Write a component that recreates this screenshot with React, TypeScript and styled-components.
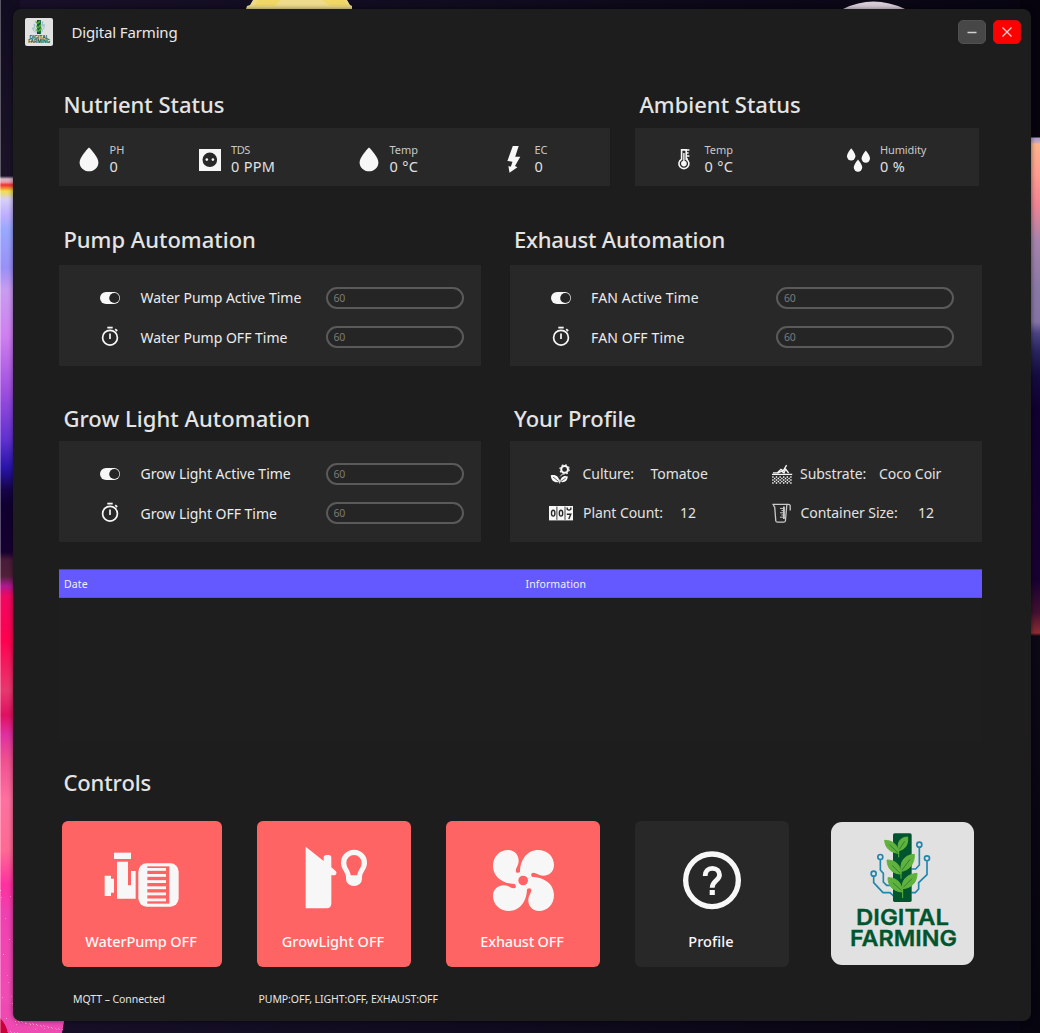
import React from "react";
import styled, { createGlobalStyle } from "styled-components";

const font = `"Noto Sans", "Open Sans", sans-serif`;
const white = "#f7f7f7";
const salmon = "#ff6464";

const GlobalStyle = createGlobalStyle`
  * { box-sizing: border-box; }
  body { margin: 0; overflow: hidden; background: #0a0716; font-family: ${font}; }
`;

const Desktop = styled.div`
  position: relative;
  width: 1040px;
  height: 1033px;
  padding: 9px 9px 12px 13px;
  overflow: hidden;
`;

const Wallpaper = styled.svg`
  position: absolute;
  inset: 0;
  z-index: -1;
`;

const AppWindow = styled.div`
  width: 1018px;
  height: 1012px;
  border-radius: 8px;
  background: #1d1d1d;
  box-shadow: 0 0 5px rgba(0, 0, 0, 0.55);
  display: flex;
  flex-direction: column;
`;

const TitleBar = styled.header`
  display: flex;
  align-items: center;
  height: 45px;
  padding: 0 10.5px 0 11.5px;
  border-radius: 8px 8px 0 0;
`;

const Title = styled.div`
  flex: 1;
  margin: 1px 0 0 19px;
  font-size: 15px;
  line-height: 20px;
  letter-spacing: -0.15px;
  color: #e8e8e8;
`;

const WindowButton = styled.button<{ $bg: string; $border: string }>`
  width: 28px;
  height: 24px;
  margin: 0 0 0 7px;
  padding: 0;
  border: 1px solid ${(p) => p.$border};
  border-radius: 5px;
  background: ${(p) => p.$bg};
  display: grid;
  place-items: center;
`;

const Content = styled.main`
  padding: 35px 0 0 46px;
`;

const SectionRow = styled.div<{ $columns: string; $gap: number; $after: number }>`
  display: grid;
  grid-template-columns: ${(p) => p.$columns};
  column-gap: ${(p) => p.$gap}px;
  margin-bottom: ${(p) => p.$after}px;
`;

const Heading = styled.h2<{ $gap: number; $track?: number }>`
  margin: 0 0 ${(p) => p.$gap}px 4.4px;
  font-size: 22px;
  font-weight: 500;
  line-height: 30px;
  letter-spacing: ${(p) => p.$track ?? 0}px;
  color: #e4e4e4;
  white-space: nowrap;
`;

const StatPanel = styled.div<{ $columns: string; $pad: number }>`
  display: grid;
  grid-template-columns: ${(p) => p.$columns};
  height: 58px;
  padding-left: ${(p) => p.$pad}px;
  background: #282828;
`;

const Stat = styled.div`
  display: flex;
  white-space: nowrap;
`;

const StatText = styled.div`
  padding-top: 13px;
`;

const StatLabel = styled.div<{ $track?: number }>`
  font-size: 11px;
  line-height: 17px;
  letter-spacing: ${(p) => p.$track ?? 0}px;
  color: #c9c9c9;
`;

const StatValue = styled.div`
  font-size: 14.5px;
  line-height: 16px;
  letter-spacing: 0.3px;
  color: #e0e0e0;
`;

const Panel = styled.div`
  height: 101px;
  padding-top: 13px;
  background: #282828;
`;

const SettingRow = styled.label`
  display: flex;
  align-items: center;
  height: 39.4px;
  padding-left: 36px;
`;

const SettingName = styled.span<{ $track?: number }>`
  width: 185px;
  margin: 1px 0 0 15.5px;
  font-size: 14px;
  line-height: 20px;
  letter-spacing: ${(p) => p.$track ?? 0}px;
  color: #ececec;
  white-space: nowrap;
`;

const TimeInput = styled.input<{ $width: number }>`
  width: ${(p) => p.$width}px;
  height: 22px;
  padding: 0 0 0 6px;
  border: 2px solid #5a5a5a;
  border-radius: 11px;
  background: #252525;
  font-family: ${font};
  font-size: 10.5px;
  letter-spacing: -0.2px;
  outline: none;
  &::placeholder { color: #7b7b7b; opacity: 1; }
`;

const ProfileRow = styled.div`
  display: grid;
  grid-template-columns: 221px 1fr;
  height: 39px;
  padding-left: 39.5px;
`;

const ProfileItem = styled.div`
  display: flex;
  align-items: center;
  font-size: 14px;
  line-height: 20px;
  color: #e2e2e2;
  white-space: nowrap;
`;

const ProfileKey = styled.span<{ $gap: number; $width: number }>`
  margin-left: ${(p) => p.$gap}px;
  width: ${(p) => p.$width}px;
  letter-spacing: -0.06px;
`;

const ProfileValue = styled.span`
  letter-spacing: -0.06px;
`;

const LogTable = styled.div`
  width: 923px;
  height: 173px;
  margin-bottom: 25px;
  background: #1e1e1e;
`;

const LogHead = styled.div`
  display: grid;
  grid-template-columns: 1fr 1fr;
  align-items: center;
  height: 29px;
  border-top: 1px solid #4a44a8;
  border-bottom: 1px solid #5a50e0;
  background: #6459ff;
`;

const LogCell = styled.div`
  padding: 1px 0 0 5px;
  font-size: 10.5px;
  line-height: 16px;
  letter-spacing: 0.1px;
  color: #f0f0ff;
`;

const ControlRow = styled.div`
  display: flex;
  align-items: flex-start;
  gap: 35px;
  margin-left: 3px;
`;

const ControlButton = styled.button<{ $width: number; $bg: string }>`
  width: ${(p) => p.$width}px;
  height: 146px;
  padding: 0;
  border: 0;
  border-radius: 6px;
  background: ${(p) => p.$bg};
  display: flex;
  flex-direction: column;
  align-items: center;
`;

const ControlLabel = styled.span<{ $track?: number }>`
  padding-right: 2px;
  font-family: ${font};
  font-size: 14.5px;
  font-weight: 500;
  line-height: 20px;
  letter-spacing: ${(p) => p.$track ?? 0}px;
  color: #fff6f6;
`;

const LogoCard = styled.div<{ $size: number; $radius: number }>`
  width: ${(p) => p.$size}px;
  height: ${(p) => p.$size}px;
  border-radius: ${(p) => p.$radius}px;
  background: #e1e1e1;
  overflow: hidden;
  flex: none;
  svg { display: block; }
`;

const LogoSlot = styled.div`
  margin: 1px 0 0 7px;
`;

const StatusBar = styled.footer`
  display: grid;
  grid-template-columns: 185.5px 1fr;
  margin: 24px 0 0 14px;
  font-size: 10.5px;
  line-height: 16px;
  letter-spacing: -0.07px;
  color: #e6e6e6;
`;

const StatIcon = ({ children }: { children: React.ReactNode }) => (
  <svg width="42" height="58" viewBox="0 0 42 58" fill={white}>{children}</svg>
);

const DropIcon = () => (
  <StatIcon>
    <path d="M21 19.5C23.4 21.8 30.4 29.5 30.4 34.4C30.4 39.4 26.2 43.2 21 43.2C15.8 43.2 11.6 39.4 11.6 34.4C11.6 29.5 18.6 21.8 21 19.5Z" />
  </StatIcon>
);

const SocketIcon = () => (
  <StatIcon>
    <rect x="10" y="21" width="22" height="22" />
    <circle cx="20.8" cy="31.8" r="7.3" fill="#282828" />
    <circle cx="17.8" cy="31.6" r="1.3" />
    <circle cx="23.9" cy="31.6" r="1.3" />
  </StatIcon>
);

const BoltIcon = () => (
  <StatIcon>
    <path d="M19.8 18H25.7L22.2 28.7H27.3L22 38L24.4 39.3L16.5 44.8L15.4 38L17.8 38.7L19.5 33.7L14.4 33Z" />
  </StatIcon>
);

const ThermometerIcon = () => (
  <StatIcon>
    <path d="M18.6 31.2V21.9H23.2V31.2A5 5 0 1 1 18.6 31.2Z" fill="none" stroke={white} strokeWidth="1.6" />
    <circle cx="20.9" cy="35.6" r="2.8" />
    <path d="M20.9 25V35M23 22H26.4M23 25H25.6M23 28H26.4M23 31H25" stroke={white} strokeWidth="1.4" />
  </StatIcon>
);

const smallDrop = "M0 0C1.2 1.4 4.2 5.4 4.2 8A4.2 4.2 0 0 1 -4.2 8C-4.2 5.4 -1.2 1.4 0 0Z";
const HumidityIcon = () => (
  <StatIcon>
    <path transform="translate(13.2 20.2)" d={smallDrop} />
    <path transform="translate(27.8 22.6)" d={smallDrop} />
    <path transform="translate(20 31.6)" d={smallDrop} />
  </StatIcon>
);

const ToggleIcon = () => (
  <svg width="30" height="24" viewBox="0 0 30 24">
    <rect x="5" y="6" width="20" height="12" rx="6" fill={white} />
    <circle cx="19.3" cy="12" r="5.1" fill="#252525" />
  </svg>
);

const TimerIcon = () => (
  <svg width="30" height="24" viewBox="0 0 30 24" fill="none" stroke={white}>
    <circle cx="15" cy="12.7" r="7.4" strokeWidth="1.7" />
    <path d="M12.3 2.6H17.7" strokeWidth="1.8" />
    <path d="M15 8.600V14" strokeWidth="1.7" />
    <path d="M20.2 4.2L22.2 6" strokeWidth="1.7" />
  </svg>
);

const ProfileSvg = ({ children }: { children: React.ReactNode }) => (
  <svg width="24" height="24" viewBox="0 0 24 24" fill={white}>{children}</svg>
);

const FlowerIcon = () => (
  <ProfileSvg>
    <circle cx="15.6" cy="7.4" r="3.4" fill="none" stroke={white} strokeWidth="2" />
    <circle cx="15.6" cy="7.4" r="4.7" fill="none" stroke={white} strokeWidth="1.1" strokeDasharray="1.8 1.89" />
    <path d="M14 11.5C13 12.6 12 13.5 11.2 14.4M10.7 17.5V21.5" stroke={white} strokeWidth="1" fill="none" />
    <path d="M1.8 13.2C7 12.3 10.4 14.4 10.2 20C5.4 21.2 2 18.6 1.8 13.2Z" />
    <path d="M18.8 14.5C15 12.8 11.4 15 11.2 19.8C15.6 21 18.6 18.8 18.8 14.5Z" />
    <path d="M4 15L9.6 19.4M16.8 16L12 19.4" stroke="#282828" strokeWidth="0.7" />
  </ProfileSvg>
);

const CounterIcon = () => (
  <ProfileSvg>
    <rect x="0" y="5" width="24" height="14.4" />
    <path d="M7.9 5.6V18.8M16 5.6V18.8" stroke="#282828" strokeWidth="0.9" />
    <g fill="none" stroke="#282828" strokeWidth="1.4">
      <ellipse cx="4.2" cy="12.2" rx="1.7" ry="2.9" />
      <ellipse cx="12" cy="12.2" rx="1.7" ry="2.9" />
      <path d="M18.2 6.4V8.2Q20 10 21.8 8.2V6.4" />
      <path d="M17.8 13.2H21.8L19.8 18" />
    </g>
  </ProfileSvg>
);

const SoilIcon = () => (
  <ProfileSvg>
    <g stroke={white} fill="none">
      <path d="M2 12.4H22.2" strokeWidth="1.3" />
      <path d="M3 10.8H7.5L11 7.4L13.2 8.8L16.6 3.2M8 11L11.6 9.2L14 11L15.6 7L18.6 11" strokeWidth="1.3" />
      <path d="M2.2 15H22M2.2 18H22M2.2 21H22" strokeWidth="1.4" strokeDasharray="1.4 2.2" />
      <path d="M4 16.500H21M4 19.500H21" strokeWidth="1.4" strokeDasharray="1.4 2.2" />
    </g>
  </ProfileSvg>
);

const BeakerIcon = () => (
  <ProfileSvg>
    <g stroke="#c9c9c9" fill="none">
      <path d="M2.4 3.3H18.2Q20.4 3.3 20.2 6V9.4M3.2 4.2L4.7 6L5.800 20Q6 21.2 7.4 21.2H13.6Q15.2 21.2 15.4 20L16.8 4" strokeWidth="1.3" />
      <path d="M13.900 5.500V18" strokeWidth="1.800" />
      <path d="M10 7.4H15M11.4 9.6H15M10 11.8H15M11.4 14H15M10 16.2H15" strokeWidth="1" />
    </g>
  </ProfileSvg>
);

const PumpIcon = () => (
  <svg width="160" height="110" viewBox="186 183 480 330" fill={white}>
    <rect x="342" y="278" width="51" height="19" />
    <path d="M351 305H384V376H393V333H407V416H351Z" />
    <path d="M314 347H333V356H342V398H333V408H314Z" />
    <rect x="415" y="310" width="121" height="130" rx="25" />
    <rect x="442" y="319" width="66" height="112" fill={salmon} />
    {[324, 342, 360.5, 379, 397.5, 415.5].map((y) => (
      <rect key={y} x="441" y={y} width="57" height="8.5" />
    ))}
  </svg>
);

const HouseLightIcon = () => (
  <svg width="154" height="110" viewBox="771 183 462 330" fill={white}>
    <path d="M917 260L971 303V293Q971 285 979 285H986Q994 285 994 293V322L1007 333Q1013 340 1005 346H994V430Q994 445 980 445H917Z" />
    <path
      fillRule="evenodd"
      d="M1062 269A39 39 0 0 1 1101 308C1101 328 1086 336 1086 352V357A24 21 0 0 1 1038 357V352C1038 336 1023 328 1023 308A39 39 0 0 1 1062 269ZM1062 285A23 23 0 0 0 1039 308C1039 324 1051 330 1052 346H1072C1073 330 1085 324 1085 308A23 23 0 0 0 1062 285Z"
    />
  </svg>
);

const FanIcon = () => (
  <svg width="154" height="110" viewBox="48 63 462 330" fill={white}>
    {[0, 90, 180, 270].map((a) => (
      <path
        key={a}
        transform={`rotate(${a} 280.5 241.5)`}
        d="M270 218C270 178 292 150 324 150C352 150 372 170 372 195C372 216 356 227 340 227C326 227 320 219 311 219L306 231L280.5 241.5Z"
      />
    ))}
    {[0, 90, 180, 270].map((a) => (
      <circle key={a} transform={`rotate(${a} 280.5 241.5)`} cx="310" cy="224.5" r="6.5" fill={salmon} />
    ))}
    <circle cx="279.5" cy="241.5" r="14.5" fill={salmon} />
  </svg>
);

const HelpIcon = () => (
  <svg width="154" height="110" viewBox="615 63 462 330" fill="none" stroke={white} strokeWidth="16">
    <circle cx="846" cy="241" r="79" />
    <path d="M825.500 228C825.500 214 834 205 847 205C860 205 868.500 214 868.500 225C868.500 241 846.500 243 846.500 263" strokeWidth="14.500" />
    <rect x="839" y="270" width="15.500" height="15" fill={white} stroke="none" />
  </svg>
);

const sprigs = [
  "M266 172V150M266 160C243 158 226 146 224 121C246 121 264 133 266 160ZM266 152C260 128 270 112 293 111C295 134 286 148 266 152Z",
  "M273 236V214M273 222C250 222 232 208 231 180C254 180 272 192 273 222ZM274 214C268 184 286 164 313 163C314 190 300 210 274 214Z",
  "M278 294V262M277 276C252 274 234 260 234 233C258 233 276 246 277 276ZM278 266C272 242 292 222 321 220C321 246 306 264 278 266Z",
];

const Logo = ({ size, view }: { size: number; view: string }) => (
  <svg width={size} height={size} viewBox={view}>
    <g fill="none" stroke="#1f86ad" strokeWidth="5">
      <path d="M211 180V210L220 220V246L230 256H250M191 230V248L219 278H240L252 289M328 143V195L317 207H304M351 184V224L326 248V267L316 278H304" />
      <circle cx="211" cy="171" r="7.500" />
      <circle cx="191" cy="221" r="7.500" />
      <circle cx="328" cy="134" r="7.500" />
      <circle cx="351" cy="175" r="7.500" />
    </g>
    <rect x="249" y="100" width="56" height="206" rx="5" fill="#00552f" />
    {sprigs.map((d) => (
      <path key={d} d={d} fill="#60b23d" stroke="#60b23d" strokeWidth="3" />
    ))}
    <path
      d="M238 134L264 158M284 124L268 148M246 196L271 220M300 178L276 210M248 248L275 272M306 236L280 262"
      stroke="#1e7a35"
      strokeWidth="2.500"
    />
    <g fill="#00552f" stroke="#00552f" strokeWidth="1" fontFamily="Inter, sans-serif" fontWeight="600" fontSize="66">
      <text x="138" y="373.500" textLength="279" lengthAdjust="spacingAndGlyphs">DIGITAL</text>
      <text x="120" y="437" textLength="321" lengthAdjust="spacingAndGlyphs">FARMING</text>
    </g>
  </svg>
);

const leftStops: [number, string][] = [
  [0, "#120c20"], [176, "#1b1429"], [179, "#d8b8c8"], [182, "#e8a0b0"], [185, "#f03030"], [191, "#f0e040"],
  [199, "#d8d0f8"], [214, "#c0b0ff"], [230, "#98a8ff"], [268, "#9a90f8"], [290, "#c99cf0"], [335, "#cf80f0"],
  [390, "#a050e0"], [440, "#6030d0"], [468, "#2814a8"], [490, "#160448"], [505, "#100030"], [552, "#160030"],
  [560, "#481c38"], [576, "#502038"], [586, "#b01890"], [596, "#f00860"], [640, "#ff0050"], [690, "#e83870"],
  [715, "#e01060"], [735, "#e030a0"], [760, "#f05090"], [800, "#ff70a0"], [850, "#ff6a94"], [885, "#ff30a0"],
  [912, "#f040b0"], [1000, "#f04cb4"], [1033, "#e83cac"],
];
const rightStops: [number, string][] = [
  [0, "#06030f"], [137, "#06030f"], [138, "#a89ac8"], [142, "#c8a8c0"], [144, "#fcb48e"], [175, "#ff9c90"],
  [205, "#f08494"], [240, "#a884ac"], [290, "#8878a4"], [322, "#8474a4"], [333, "#4c4484"], [352, "#28245c"],
  [375, "#150c40"], [410, "#100030"], [580, "#180030"], [612, "#401030"], [633, "#8c2c34"], [636, "#0c0816"],
  [1033, "#06040e"],
];

const Stops = ({ list }: { list: [number, string][] }) => (
  <>{list.map(([y, c]) => <stop key={y} offset={y / 1033} stopColor={c} />)}</>
);

const specks = Array.from({ length: 90 }, (_, i) => ({
  x: (i * 37) % 63,
  y: i < 55 ? 890 + ((i * 53) % 143) : 1021 + ((i * 7) % 12),
  c: i % 3 ? "#ff9ad8" : "#ffe0b0",
}));

const Backdrop = () => (
  <Wallpaper width="1040" height="1033" viewBox="0 0 1040 1033">
    <defs>
      <linearGradient id="left" x1="0" y1="0" x2="0" y2="1033" gradientUnits="userSpaceOnUse"><Stops list={leftStops} /></linearGradient>
      <linearGradient id="right" x1="0" y1="0" x2="0" y2="1033" gradientUnits="userSpaceOnUse"><Stops list={rightStops} /></linearGradient>
      <linearGradient id="base" x1="0" x2="1"><stop offset="0" stopColor="#171028" /><stop offset="1" stopColor="#080512" /></linearGradient>
    </defs>
    <rect width="1040" height="1033" fill="url(#base)" />
    <rect width="20" height="1033" fill="url(#left)" />
    <path d="M0 1010H66L62 1033H0Z" fill="#ee4ab2" />
    {specks.map((s, i) => <rect key={i} x={s.x} y={s.y} width="1" height="1" fill={s.c} opacity="0.7" />)}
    <path d="M0 1018Q6 1024 8 1033H0Z" fill="#c8003c" />
    <rect x="1020" width="20" height="1033" fill="url(#right)" />
    <rect width="1" height="1033" fill="#fff" opacity="0.3" />
    <path d="M246 9L247 6L250 5L253 0H347L350 5L352 6V9Z" fill="#eedc8c" />
    <path d="M258 0H280L275 6H254ZM322 0H344L349 6H330Z" fill="#f3d44c" opacity="0.6" />
    <path d="M843 9Q873 -6 905 9Z" fill="#d8ccd8" />
  </Wallpaper>
);

const Metric = ({ icon, label, value, track }: { icon: React.ReactNode; label: string; value: string; track?: number }) => (
  <Stat>
    {icon}
    <StatText>
      <StatLabel $track={track}>{label}</StatLabel>
      <StatValue>{value}</StatValue>
    </StatText>
  </Stat>
);

const Timing = ({ active, off, width, track }: { active: string; off: string; width: number; track?: number }) => (
  <Panel>
    <SettingRow>
      <ToggleIcon />
      <SettingName $track={track}>{active}</SettingName>
      <TimeInput $width={width} placeholder="60" />
    </SettingRow>
    <SettingRow>
      <TimerIcon />
      <SettingName $track={track}>{off}</SettingName>
      <TimeInput $width={width} placeholder="60" />
    </SettingRow>
  </Panel>
);

const Fact = ({ icon, name, value, gap, width }: { icon: React.ReactNode; name: string; value: string; gap: number; width: number }) => (
  <ProfileItem>
    {icon}
    <ProfileKey $gap={gap} $width={width}>{name}</ProfileKey>
    <ProfileValue>{value}</ProfileValue>
  </ProfileItem>
);

export default function App() {
  return (
    <Desktop>
      <GlobalStyle />
      <Backdrop />
      <AppWindow>
        <TitleBar>
          <LogoCard $size={28} $radius={2}><Logo size={28} view="73 72 410 410" /></LogoCard>
          <Title>Digital Farming</Title>
          <WindowButton $bg="#474747" $border="#505050" aria-label="Minimize">
            <svg width="12" height="12" viewBox="0 0 12 12"><path d="M1.500 6.500H10.500" stroke="#d0d0d0" strokeWidth="1.500" /></svg>
          </WindowButton>
          <WindowButton $bg="#ff0000" $border="#d80a0a" aria-label="Close">
            <svg width="12" height="12" viewBox="0 0 12 12"><path d="M1.500 1.500L10.500 10.500M10.500 1.500L1.500 10.500" stroke="#ffd8d8" strokeWidth="1.200" /></svg>
          </WindowButton>
        </TitleBar>
        <Content>
          <SectionRow $columns="551px 344px" $gap={25} $after={38}>
            <section>
              <Heading $gap={9}>Nutrient Status</Heading>
              <StatPanel $columns="121.5px 158.5px 145px 1fr" $pad={8.5}>
                <Metric icon={<DropIcon />} label="PH" value="0" />
                <Metric icon={<SocketIcon />} label="TDS" value="0 PPM" track={-0.4} />
                <Metric icon={<DropIcon />} label="Temp" value="0 °C" />
                <Metric icon={<BoltIcon />} label="EC" value="0" />
              </StatPanel>
            </section>
            <section>
              <Heading $gap={9}>Ambient Status</Heading>
              <StatPanel $columns="175.5px 1fr" $pad={27.5}>
                <Metric icon={<ThermometerIcon />} label="Temp" value="0 °C" />
                <Metric icon={<HumidityIcon />} label="Humidity" value="0 %" track={-0.12} />
              </StatPanel>
            </section>
          </SectionRow>
          <SectionRow $columns="422px 472.5px" $gap={28.5} $after={37}>
            <section>
              <Heading $gap={11}>Pump Automation</Heading>
              <Timing active="Water Pump Active Time" off="Water Pump OFF Time" width={138} />
            </section>
            <section>
              <Heading $gap={11} $track={-0.17}>Exhaust Automation</Heading>
              <Timing active="FAN Active Time" off="FAN OFF Time" width={178} track={0.15} />
            </section>
          </SectionRow>
          <SectionRow $columns="422px 472.5px" $gap={28.5} $after={27}>
            <section>
              <Heading $gap={8} $track={0.05}>Grow Light Automation</Heading>
              <Timing active="Grow Light Active Time" off="Grow Light OFF Time" width={138} track={-0.03} />
            </section>
            <section>
              <Heading $gap={8}>Your Profile</Heading>
              <Panel>
                <ProfileRow>
                  <Fact icon={<FlowerIcon />} name="Culture:" value="Tomatoe" gap={9.5} width={68} />
                  <Fact icon={<SoilIcon />} name="Substrate:" value="Coco Coir" gap={6} width={79} />
                </ProfileRow>
                <ProfileRow>
                  <Fact icon={<CounterIcon />} name="Plant Count:" value="12" gap={10} width={97} />
                  <Fact icon={<BeakerIcon />} name="Container Size:" value="12" gap={6.5} width={117.5} />
                </ProfileRow>
              </Panel>
            </section>
          </SectionRow>
          <LogTable>
            <LogHead>
              <LogCell>Date</LogCell>
              <LogCell>Information</LogCell>
            </LogHead>
          </LogTable>
          <Heading $gap={24} $track={-0.1}>Controls</Heading>
          <ControlRow>
            <ControlButton $width={160} $bg={salmon}>
              <PumpIcon />
              <ControlLabel $track={-0.1}>WaterPump OFF</ControlLabel>
            </ControlButton>
            <ControlButton $width={154} $bg={salmon}>
              <HouseLightIcon />
              <ControlLabel>GrowLight OFF</ControlLabel>
            </ControlButton>
            <ControlButton $width={154} $bg={salmon}>
              <FanIcon />
              <ControlLabel $track={-0.2}>Exhaust OFF</ControlLabel>
            </ControlButton>
            <ControlButton $width={154} $bg="#282828">
              <HelpIcon />
              <ControlLabel $track={0.1}>Profile</ControlLabel>
            </ControlButton>
            <LogoSlot>
              <LogoCard $size={143} $radius={11}><Logo size={143} view="63 66 429 429" /></LogoCard>
            </LogoSlot>
          </ControlRow>
          <StatusBar>
            <span>MQTT – Connected</span>
            <span>PUMP:OFF, LIGHT:OFF, EXHAUST:OFF</span>
          </StatusBar>
        </Content>
      </AppWindow>
    </Desktop>
  );
}
